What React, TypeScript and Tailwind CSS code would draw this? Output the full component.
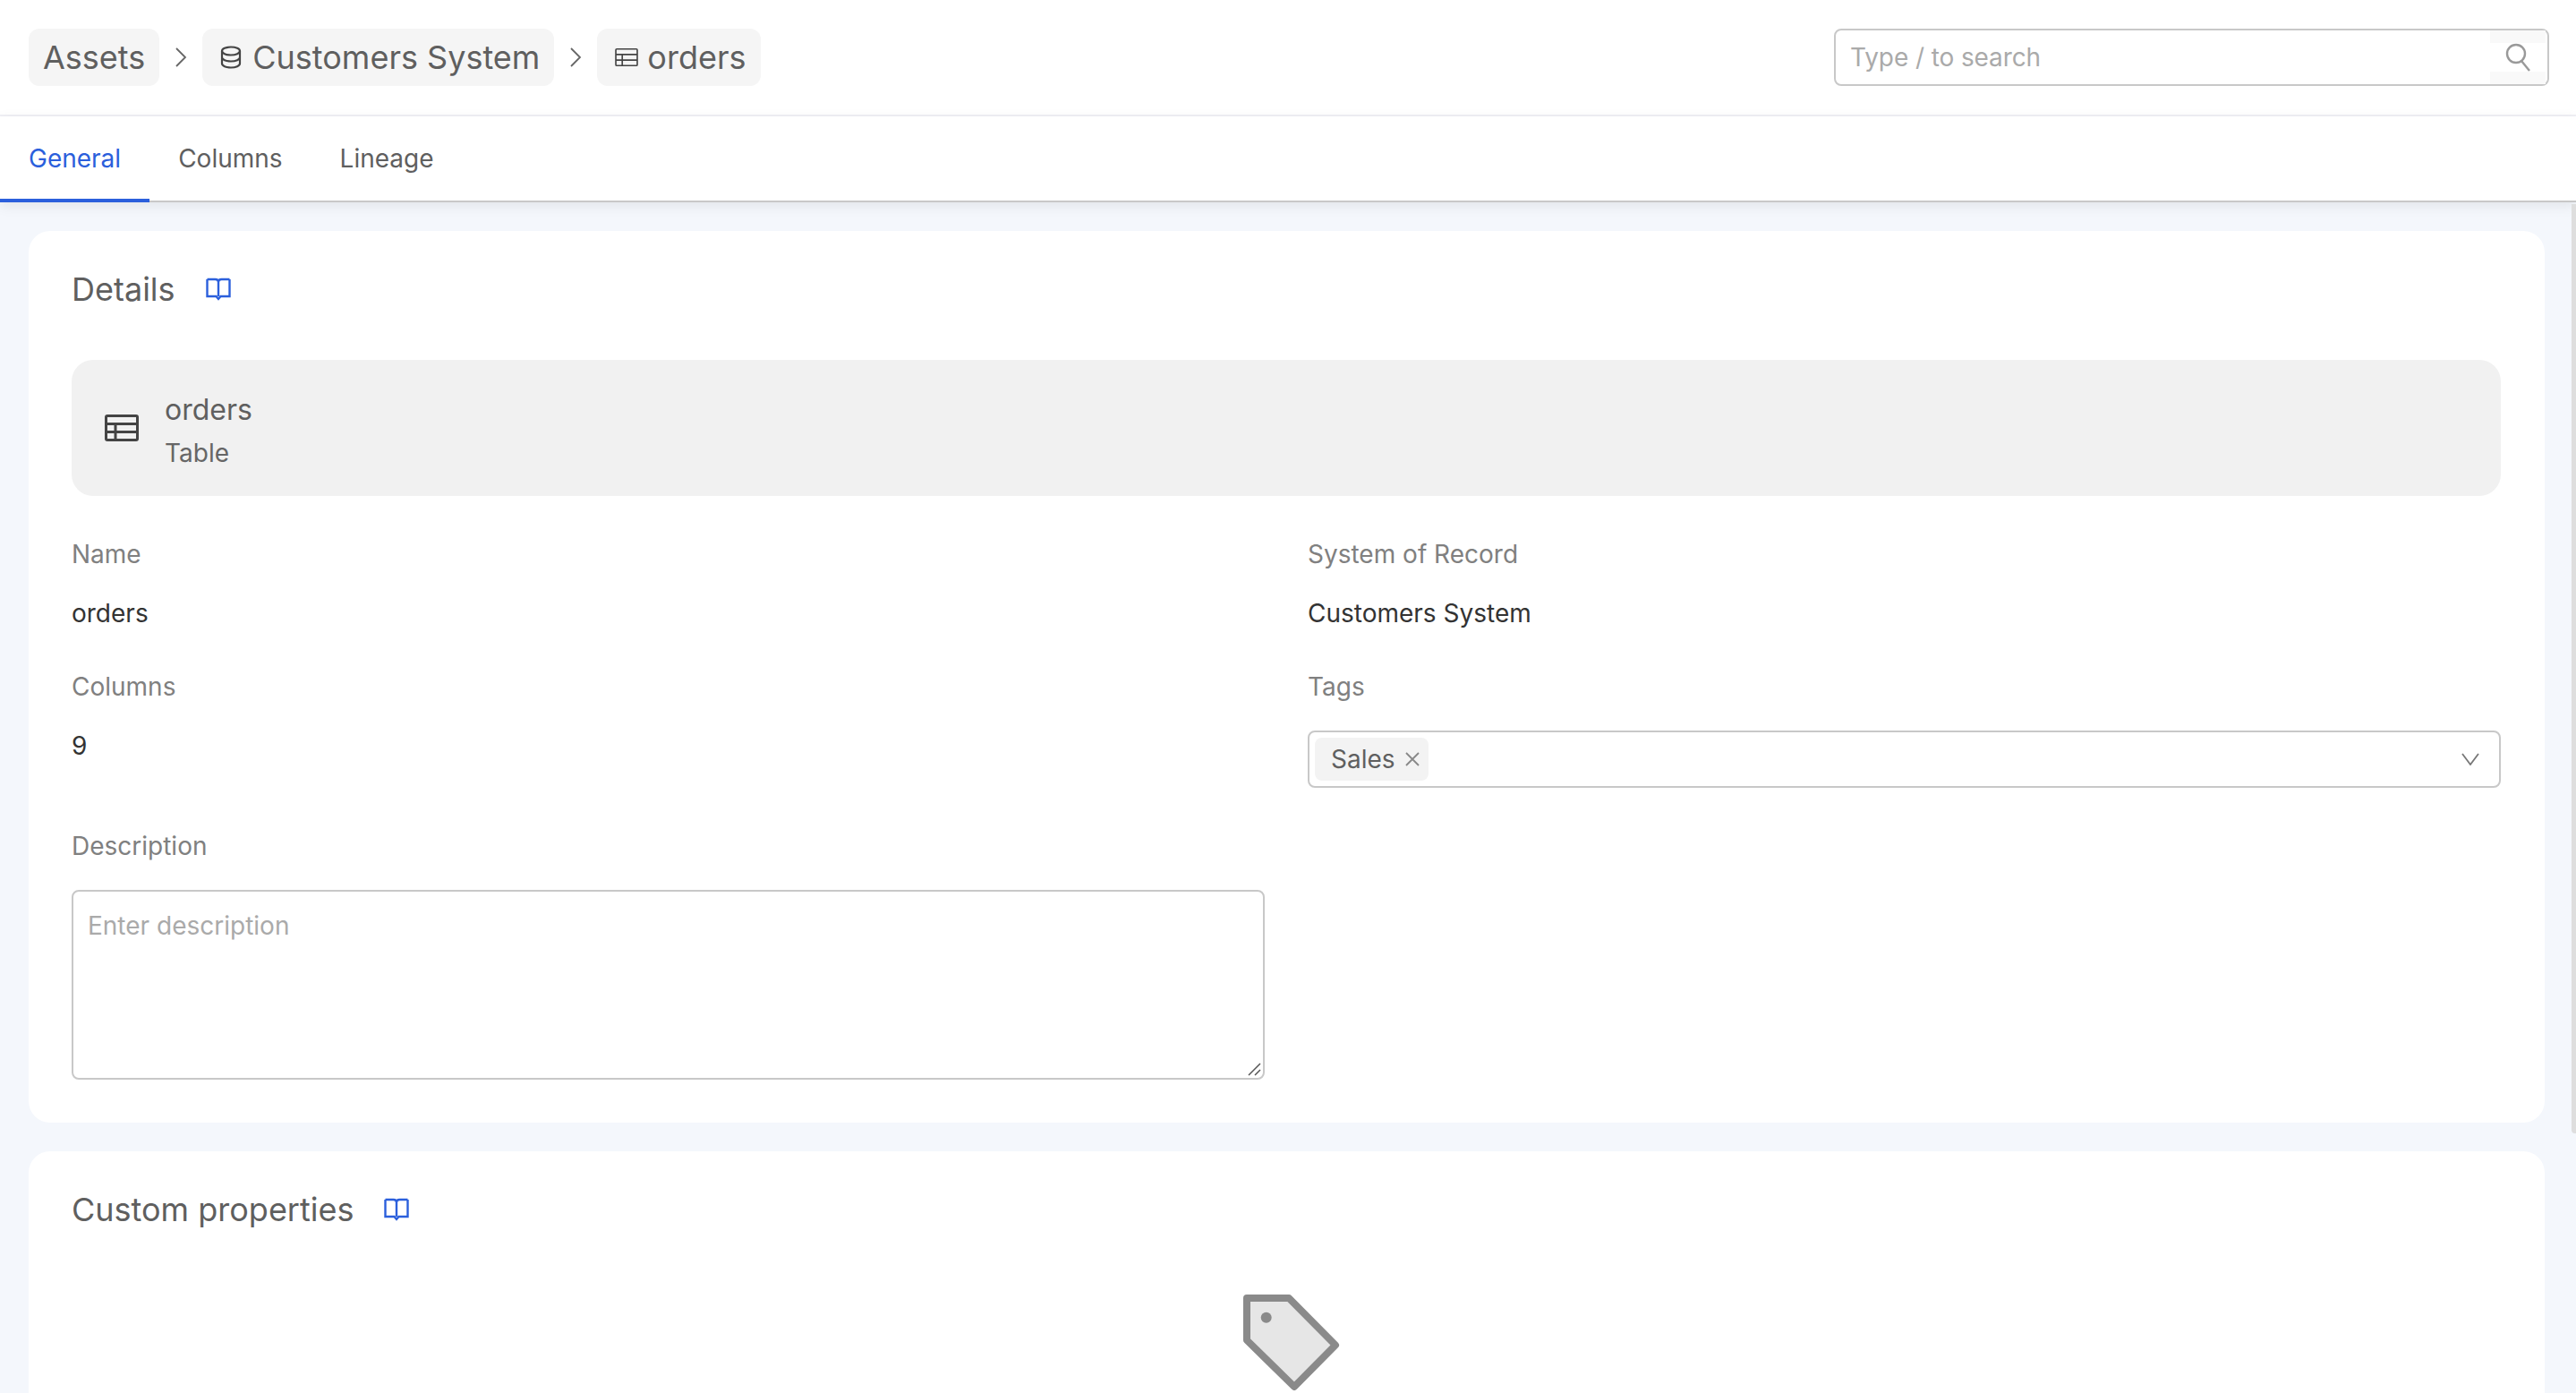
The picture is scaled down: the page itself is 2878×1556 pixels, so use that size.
const font = "font-['Inter',sans-serif]";

const BookIcon = () => (
  <svg width="28" height="26" viewBox="0 0 28 26" fill="none" stroke="#2b5fdc" strokeWidth="2.4">
    <path d="M1.500 2h9c2 0 3.500 1 3.500 3v16M26.500 2h-9c-2 0-3.500 1-3.500 3M1.500 2v19h10l2.500 3 2.500-3h10V2" />
  </svg>
);

const TableIcon = ({ w, h, stroke }: { w: number; h: number; stroke: number }) => (
  <svg width={w} height={h} viewBox="0 0 38 30" fill="none" stroke="#444" strokeWidth={stroke}>
    <rect x="1.500" y="1.500" width="35" height="27" rx="1.500" />
    <path d="M1.500 10.500h35M1.500 19.500h35M12 10.500v18" />
  </svg>
);

const DatabaseIcon = () => (
  <svg width="24" height="26" viewBox="0 0 24 26" fill="none" stroke="#444" strokeWidth="2.200">
    <ellipse cx="12" cy="6" rx="10" ry="4.500" />
    <path d="M2 6v14c0 2.500 4.500 4.500 10 4.500s10-2 10-4.500V6M2 13c0 2.500 4.500 4.500 10 4.500S22 15.500 22 13" />
  </svg>
);

const Chevron = () => (
  <svg width="14" height="24" viewBox="0 0 14 24" fill="none" stroke="#666" strokeWidth="1.800">
    <path d="M2 2l10 10L2 22" />
  </svg>
);

const TagIcon = () => (
  <svg width="108" height="108" viewBox="0 0 108 108">
    <path d="M4 4h47l52 52.500L57 103 4 51z" fill="#e6e6e6" stroke="#8a8a8a" strokeWidth="8" strokeLinejoin="round" />
    <circle cx="25.700" cy="25.700" r="6" fill="#8a8a8a" />
  </svg>
);

const Crumb = ({ children }: { children: React.ReactNode }) => (
  <div className="flex h-16 items-center gap-2.5 rounded-xl bg-[#f5f5f5] px-4 text-[36px] text-[#5f5f5f]">{children}</div>
);

const Field = ({ label, value }: { label: string; value: string }) => (
  <div>
    <div className="mb-[27px] h-11 text-[28px] leading-[44px] text-[#808080]">{label}</div>
    <div className="h-[34px] text-[28px] leading-[34px] text-[#333]">{value}</div>
  </div>
);

const CardTitle = ({ title }: { title: string }) => (
  <div className="flex h-[34px] items-center gap-[34px]">
    <span className="text-[36px] text-[#5f5f5f]">{title}</span>
    <BookIcon />
  </div>
);

export default function App() {
  return (
    <div className={`${font} relative flex h-screen flex-col overflow-hidden bg-[#f4f7fc]`}>
      <header className="flex h-[130px] shrink-0 items-center justify-between border-b-2 border-[#f0f0f5] bg-white pl-8 pr-[30px]">
        <div className="flex items-center gap-[17px]">
          <Crumb>Assets</Crumb>
          <Chevron />
          <div className="flex h-16 items-center gap-3 rounded-xl bg-[#f5f5f5] pl-5 pr-4 text-[36px] text-[#5f5f5f]">
            <DatabaseIcon />
            Customers System
          </div>
          <Chevron />
          <div className="flex h-16 items-center gap-2.5 rounded-xl bg-[#f5f5f5] pl-5 pr-4 text-[36px] text-[#5f5f5f]">
            <TableIcon w={26} h={22} stroke={2.400} />
            orders
          </div>
        </div>
        <div className="flex h-16 w-[799px] items-center justify-between rounded-lg border-2 border-[#c8c8c8] pl-4 pr-0.5">
          <span className="text-[28px] tracking-[-0.1px] text-[#aaa]">Type / to search</span>
          <div className="flex h-[60px] w-[62px] items-center justify-center bg-[#f9f9f9]">
            <div className="flex h-8 w-full items-center justify-center bg-white pl-px">
              <svg width="30" height="32" viewBox="0 0 30 32" fill="none" stroke="#999" strokeWidth="2.400">
                <circle cx="12" cy="12" r="10" />
                <path d="M18 20l9 11" />
              </svg>
            </div>
          </div>
        </div>
      </header>

      <nav className="relative z-10 flex h-24 shrink-0 items-center border-b-2 border-[#c8c8c8] bg-white text-[28px] shadow-[0_4px_14px_rgba(0,0,0,0.08)]">
        <div className="relative flex h-full items-center px-8 text-[#2b5fdc]">
          General
          <div className="absolute -bottom-0.5 left-0 h-1 w-full bg-[#2b5fdc]" />
        </div>
        <div className="px-8 text-[#5f5f5f]">Columns</div>
        <div className="px-8 text-[#5f5f5f]">Lineage</div>
      </nav>

      <main className="flex flex-col gap-8 pl-8 pr-[35px] pt-8">
        <section className="rounded-3xl bg-white py-12 pl-12 pr-[49px]">
          <CardTitle title="Details" />
          <div className="mt-[62px] flex h-[152px] items-center gap-[29px] rounded-3xl bg-[#f1f1f1] pl-[37px]">
            <TableIcon w={38} h={30} stroke={3} />
            <div className="pt-[7px]">
              <div className="text-[32px] leading-[48px] text-[#5f5f5f]">orders</div>
              <div className="text-[28px] leading-[48px] text-[#666]">Table</div>
            </div>
          </div>
          <div className="mt-[43px] grid grid-cols-2 gap-x-12 gap-y-[43px]">
            <Field label="Name" value="orders" />
            <Field label="System of Record" value="Customers System" />
            <Field label="Columns" value="9" />
            <div>
              <div className="mb-[27px] h-11 text-[28px] leading-[44px] text-[#808080]">Tags</div>
              <div className="flex h-16 items-center justify-between rounded-lg border-2 border-[#c8c8c8] pl-1.5 pr-[22px]">
                <div className="flex h-12 items-center gap-[11px] rounded-lg bg-[#f3f3f3] pl-[18px] pr-2.5 text-[28px] text-[#5f5f5f]">
                  Sales
                  <svg width="16" height="16" viewBox="0 0 16 16" stroke="#888" strokeWidth="1.800">
                    <path d="M1 1l14 14M15 1L1 15" />
                  </svg>
                </div>
                <svg width="20" height="14" viewBox="0 0 20 14" fill="none" stroke="#777" strokeWidth="1.800">
                  <path d="M1 1l9 12 9-12" />
                </svg>
              </div>
            </div>
            <div>
              <div className="mb-[27px] h-11 text-[28px] leading-[44px] text-[#808080]">Description</div>
              <div className="relative h-[212px] rounded-lg border-2 border-[#c8c8c8] px-4 py-[18px] text-[28px] leading-[40px] text-[#aaa]">
                Enter description
                <svg className="absolute bottom-0.5 right-0.5" width="16" height="16" viewBox="0 0 16 16" stroke="#555" strokeWidth="1.500">
                  <path d="M15 2L2 15M15 9l-6 6" />
                </svg>
              </div>
            </div>
          </div>
        </section>

        <section className="rounded-t-3xl bg-white p-12">
          <CardTitle title="Custom properties" />
          <div className="mt-[78px] flex justify-center pl-[11px]">
            <TagIcon />
          </div>
        </section>
      </main>

      <div className="absolute right-0 top-[228px] z-20 h-[1038px] w-[5px] rounded-bl bg-[#dedede]" />
    </div>
  );
}
